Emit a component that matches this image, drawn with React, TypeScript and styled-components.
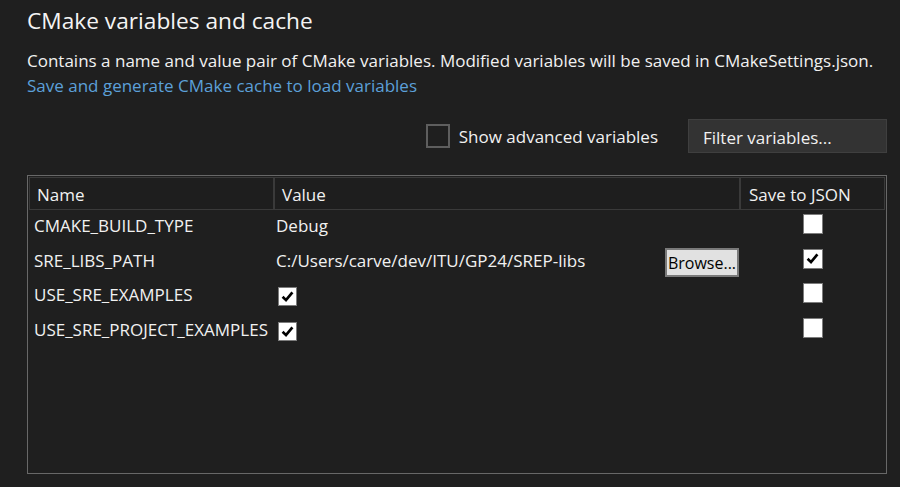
import React from "react";
import styled, { createGlobalStyle } from "styled-components";

const Global = createGlobalStyle`
  html, body { margin: 0; padding: 0; background: #1f1f1f; }
  body { font-family: "Open Sans", "Noto Sans", sans-serif; color: #f1f1f1; }
  * { box-sizing: border-box; }
`;

const Page = styled.div`
  width: 900px;
  height: 487px;
  padding: 6px 13px 0 27px;
  display: flex;
  flex-direction: column;
  overflow: hidden;
`;

const Title = styled.h1`
  margin: 0;
  font-size: 22.7px;
  font-weight: 400;
  line-height: 30px;
  color: #f4f4f4;
`;

const Description = styled.div`
  margin-top: 12px;
  font-size: 17px;
  line-height: 25px;
  white-space: nowrap;
`;

const Link = styled.a`
  color: #5ca0d9;
  text-decoration: none;
  display: block;
`;

const Toolbar = styled.div`
  margin-top: 21px;
  height: 34px;
  display: flex;
  justify-content: flex-end;
  align-items: center;
`;

const CheckLabel = styled.label`
  display: flex;
  align-items: center;
  gap: 9px;
  font-size: 17px;
  line-height: 24px;
  margin-right: 30px;
`;

const LabelText = styled.span`
  padding-top: 2px;
`;

const DarkBox = styled.span`
  width: 24px;
  height: 24px;
  border: 2px solid #5e5e5e;
  display: inline-block;
`;

const Filter = styled.div`
  width: 199px;
  height: 34px;
  background: #333333;
  border: 1px solid #3f3f3f;
  padding: 2px 0 0 14px;
  display: flex;
  align-items: center;
  font-size: 17px;
`;

const Table = styled.div`
  margin-top: 22px;
  height: 299px;
  border: 1px solid #686868;
  padding: 1px;
  display: flex;
  flex-direction: column;
`;

const cols = "243px 464px 1fr";

const HeaderRow = styled.div`
  display: grid;
  grid-template-columns: ${cols};
  column-gap: 2px;
  padding: 1px;
  background: #3a3a3a;
  height: 33px;
`;

const HeaderCell = styled.div<{ $pad: number }>`
  background: #1e1e1e;
  display: flex;
  align-items: center;
  padding-left: ${(p) => p.$pad}px;
  padding-top: 2px;
  font-size: 17px;
`;

const Row = styled.div`
  display: grid;
  grid-template-columns: ${cols};
  column-gap: 2px;
  padding: 0 1px;
  height: 34.5px;
`;

const NameCell = styled.div`
  padding: 5px 0 0 4px;
  font-size: 17px;
  line-height: 22px;
  white-space: nowrap;
`;

const ValueCell = styled.div`
  padding: 5px 0 0 1px;
  font-size: 17px;
  line-height: 22px;
  display: flex;
  justify-content: space-between;
  align-items: flex-start;
  white-space: nowrap;
`;

const SaveCell = styled.div`
  display: flex;
  justify-content: center;
  align-items: flex-start;
  padding-top: 4px;
`;

const WhiteBox = styled.span<{ $size: number }>`
  width: ${(p) => p.$size}px;
  height: ${(p) => p.$size}px;
  background: #ffffff;
  border: 1px solid #7c7c7c;
  display: inline-flex;
  align-items: center;
  justify-content: center;
`;

const ValueBox = styled.span`
  margin: 3px 0 0 2px;
  display: inline-flex;
`;

const BrowseButton = styled.button`
  margin-top: -1.5px;
  width: 74px;
  height: 29px;
  background: #e1e1e1;
  border: 2px solid #7a7a7a;
  color: #000;
  font-family: "Open Sans", "Noto Sans", sans-serif;
  font-size: 16px;
  padding: 1px 0 0;
  line-height: 24px;
`;

const Check = () => (
  <svg width="15" height="15" viewBox="0 0 15 15">
    <path d="M2.6 7.8 L6 11.1 L12.4 3.4" fill="none" stroke="#000" strokeWidth="2.7" />
  </svg>
);

const Checkbox = ({ checked, size }: { checked: boolean; size: number }) => (
  <WhiteBox $size={size}>{checked && <Check />}</WhiteBox>
);

type Variable = {
  name: string;
  value: string | boolean;
  path?: boolean;
  save: boolean;
};

const vars: Variable[] = [
  { name: "CMAKE_BUILD_TYPE", value: "Debug", save: false },
  { name: "SRE_LIBS_PATH", value: "C:/Users/carve/dev/ITU/GP24/SREP-libs", path: true, save: true },
  { name: "USE_SRE_EXAMPLES", value: true, save: false },
  { name: "USE_SRE_PROJECT_EXAMPLES", value: true, save: false },
];

export default function App() {
  return (
    <>
      <Global />
      <Page>
        <Title>CMake variables and cache</Title>
        <Description>
          Contains a name and value pair of CMake variables. Modified variables will be saved in CMakeSettings.json.
          <Link>Save and generate CMake cache to load variables</Link>
        </Description>
        <Toolbar>
          <CheckLabel>
            <DarkBox />
            <LabelText>Show advanced variables</LabelText>
          </CheckLabel>
          <Filter>Filter variables...</Filter>
        </Toolbar>
        <Table>
          <HeaderRow>
            <HeaderCell $pad={7}>Name</HeaderCell>
            <HeaderCell $pad={7}>Value</HeaderCell>
            <HeaderCell $pad={8}>Save to JSON</HeaderCell>
          </HeaderRow>
          {vars.map((v) => (
            <Row key={v.name}>
              <NameCell>{v.name}</NameCell>
              <ValueCell>
                {typeof v.value === "boolean" ? (
                  <ValueBox>
                    <Checkbox checked={v.value} size={19} />
                  </ValueBox>
                ) : (
                  <span>{v.value}</span>
                )}
                {v.path && <BrowseButton>Browse...</BrowseButton>}
              </ValueCell>
              <SaveCell>
                <Checkbox checked={v.save} size={20} />
              </SaveCell>
            </Row>
          ))}
        </Table>
      </Page>
    </>
  );
}
